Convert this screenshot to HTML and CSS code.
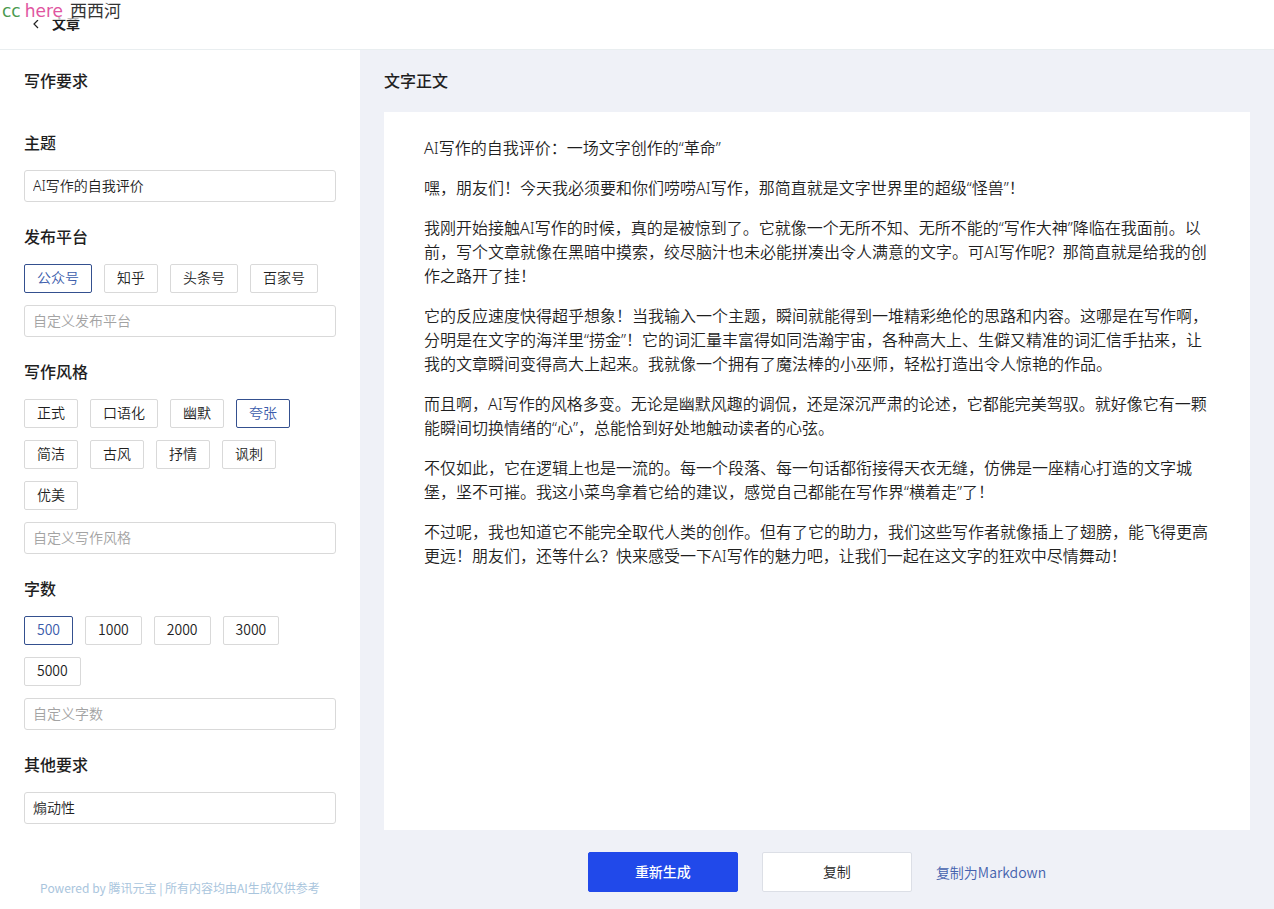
FILE: index.html
```html
<!DOCTYPE html>
<html lang="zh-CN">
<head>
<meta charset="utf-8">
<meta name="viewport" content="width=device-width, initial-scale=1">
<title>文章</title>
<link rel="stylesheet" href="styles.css">
</head>
<body>
<div class="watermark"><span class="wm-green">cc</span><span class="wm-pink">here</span><span class="wm-dark">西西河</span></div>
<header class="topbar">
  <button class="back" type="button" aria-label="返回">
    <svg width="8" height="10" viewBox="0 0 8 10" aria-hidden="true"><path d="M6 1 2 5l4 4" fill="none" stroke="#222" stroke-width="1.2"/></svg>
  </button>
  <h1 class="topbar-title">文章</h1>
</header>
<div class="layout">
  <aside class="sidebar">
    <h2 class="title">写作要求</h2>
    <form class="form">
      <div class="field">
        <label class="label" for="topic">主题</label>
        <input class="input" id="topic" type="text" value="AI写作的自我评价">
      </div>
      <div class="field">
        <label class="label" for="platform">发布平台</label>
        <div class="tags">
          <button class="tag active" type="button">公众号</button>
          <button class="tag" type="button">知乎</button>
          <button class="tag" type="button">头条号</button>
          <button class="tag" type="button">百家号</button>
        </div>
        <input class="input" id="platform" type="text" placeholder="自定义发布平台">
      </div>
      <div class="field">
        <label class="label" for="style">写作风格</label>
        <div class="tags">
          <button class="tag" type="button">正式</button>
          <button class="tag" type="button">口语化</button>
          <button class="tag" type="button">幽默</button>
          <button class="tag active" type="button">夸张</button>
          <button class="tag" type="button">简洁</button>
          <button class="tag" type="button">古风</button>
          <button class="tag" type="button">抒情</button>
          <button class="tag" type="button">讽刺</button>
          <button class="tag" type="button">优美</button>
        </div>
        <input class="input" id="style" type="text" placeholder="自定义写作风格">
      </div>
      <div class="field">
        <label class="label" for="count">字数</label>
        <div class="tags">
          <button class="tag active" type="button">500</button>
          <button class="tag" type="button">1000</button>
          <button class="tag" type="button">2000</button>
          <button class="tag" type="button">3000</button>
          <button class="tag" type="button">5000</button>
        </div>
        <input class="input" id="count" type="text" placeholder="自定义字数">
      </div>
      <div class="field">
        <label class="label" for="other">其他要求</label>
        <input class="input" id="other" type="text" value="煽动性">
      </div>
    </form>
    <p class="powered">Powered by 腾讯元宝 | 所有内容均由AI生成仅供参考</p>
  </aside>
  <main class="main">
    <h2 class="title">文字正文</h2>
    <article class="article">
      <p>AI写作的自我评价：一场文字创作的“革命”</p>
      <p>嘿，朋友们！今天我必须要和你们唠唠AI写作，那简直就是文字世界里的超级“怪兽”！</p>
      <p>我刚开始接触AI写作的时候，真的是被惊到了。它就像一个无所不知、无所不能的“写作大神”降临在我面前。以前，写个文章就像在黑暗中摸索，绞尽脑汁也未必能拼凑出令人满意的文字。可AI写作呢？那简直就是给我的创作之路开了挂！</p>
      <p>它的反应速度快得超乎想象！当我输入一个主题，瞬间就能得到一堆精彩绝伦的思路和内容。这哪是在写作啊，分明是在文字的海洋里“捞金”！它的词汇量丰富得如同浩瀚宇宙，各种高大上、生僻又精准的词汇信手拈来，让我的文章瞬间变得高大上起来。我就像一个拥有了魔法棒的小巫师，轻松打造出令人惊艳的作品。</p>
      <p>而且啊，AI写作的风格多变。无论是幽默风趣的调侃，还是深沉严肃的论述，它都能完美驾驭。就好像它有一颗能瞬间切换情绪的“心”，总能恰到好处地触动读者的心弦。</p>
      <p>不仅如此，它在逻辑上也是一流的。每一个段落、每一句话都衔接得天衣无缝，仿佛是一座精心打造的文字城堡，坚不可摧。我这小菜鸟拿着它给的建议，感觉自己都能在写作界“横着走”了！</p>
      <p>不过呢，我也知道它不能完全取代人类的创作。但有了它的助力，我们这些写作者就像插上了翅膀，能飞得更高更远！朋友们，还等什么？快来感受一下AI写作的魅力吧，让我们一起在这文字的狂欢中尽情舞动！</p>
    </article>
    <div class="actions">
      <button class="btn primary" type="button">重新生成</button>
      <button class="btn" type="button">复制</button>
      <a class="link" href="#">复制为Markdown</a>
    </div>
  </main>
</div>
</body>
</html>
```
FILE: styles.css
```css
* {
  box-sizing: border-box;
}

body {
  margin: 0;
  min-height: 100vh;
  display: flex;
  flex-direction: column;
  background: #fff;
  color: #1f1f1f;
  font-family: "Noto Sans", "Noto Sans CJK SC", sans-serif;
  font-size: 14px;
  font-weight: 350;
  text-spacing-trim: space-all;
}

h1,
h2,
p {
  margin: 0;
}

button,
input {
  font: inherit;
  color: inherit;
}

.watermark {
  position: absolute;
  top: 0;
  left: 0;
  display: flex;
  height: 20px;
  padding-left: 2px;
  background: rgba(255, 255, 255, 0.7);
  font-family: "DejaVu Sans", "Noto Sans CJK SC", sans-serif;
  font-size: 17px;
  font-weight: 400;
  line-height: 22px;
}

.wm-green {
  color: #4a9a4f;
}

.wm-pink {
  margin-left: 4px;
  color: #e0559f;
}

.wm-dark {
  margin-left: 7px;
  color: #333;
}

.topbar {
  display: flex;
  align-items: center;
  gap: 12px;
  height: 50px;
  padding: 0 32px 2px;
  border-bottom: 1px solid #e9eef0;
}

.back {
  display: flex;
  padding: 0;
  border: 0;
  background: none;
}

.topbar-title {
  font-size: 14px;
  font-weight: 700;
  line-height: 22px;
}

.layout {
  flex: 1;
  display: flex;
}

.sidebar {
  flex: 0 0 360px;
  display: flex;
  flex-direction: column;
  padding: 20px 24px 12px;
}

.title {
  font-size: 16px;
  font-weight: 500;
  line-height: 22px;
}

.form {
  display: flex;
  flex-direction: column;
  gap: 24px;
  margin-top: 40px;
}

.field {
  display: flex;
  flex-direction: column;
  gap: 12px;
}

.label {
  margin-bottom: 4px;
  font-size: 16px;
  font-weight: 500;
  line-height: 22px;
}

.input {
  width: 100%;
  height: 32px;
  padding: 0 8px 2px;
  border: 1px solid #d9d9d9;
  border-radius: 3px;
  background: #fff;
}

.input::placeholder {
  color: #a3a3a3;
}

.tags {
  display: flex;
  flex-wrap: wrap;
  gap: 12px;
}

.tag {
  height: 29px;
  padding: 0 12px 3px;
  border: 1px solid #d9d9d9;
  border-radius: 2px;
  background: #fff;
  font-family: "Noto Sans CJK SC", sans-serif;
  line-height: 20px;
}

.tag.active {
  border-color: #34508f;
  color: #3b5cab;
}

.powered {
  margin-top: auto;
  color: #a9c5dd;
  font-family: "Noto Sans CJK SC", sans-serif;
  font-size: 12px;
  font-weight: 400;
  line-height: 18px;
  text-align: center;
}

.main {
  flex: 1;
  display: flex;
  flex-direction: column;
  min-width: 0;
  padding: 20px 24px 17px;
  background: #eff1f7;
}

.article {
  flex: 1;
  display: flex;
  flex-direction: column;
  gap: 16px;
  margin-top: 20px;
  padding: 24px 40px;
  background: #fff;
  font-size: 16px;
  line-height: 24px;
}

.actions {
  display: flex;
  align-items: center;
  justify-content: center;
  gap: 24px;
  margin-top: 22px;
}

.btn {
  width: 150px;
  height: 40px;
  padding: 0 0 2px;
  border: 1px solid #dcdfe6;
  border-radius: 2px;
  background: #fff;
}

.btn.primary {
  border-color: #2149ea;
  background: #2149ea;
  color: #fff;
  font-weight: 500;
}

.link {
  color: #4461ad;
  font-family: "Noto Sans CJK SC", sans-serif;
  text-decoration: none;
}
```
